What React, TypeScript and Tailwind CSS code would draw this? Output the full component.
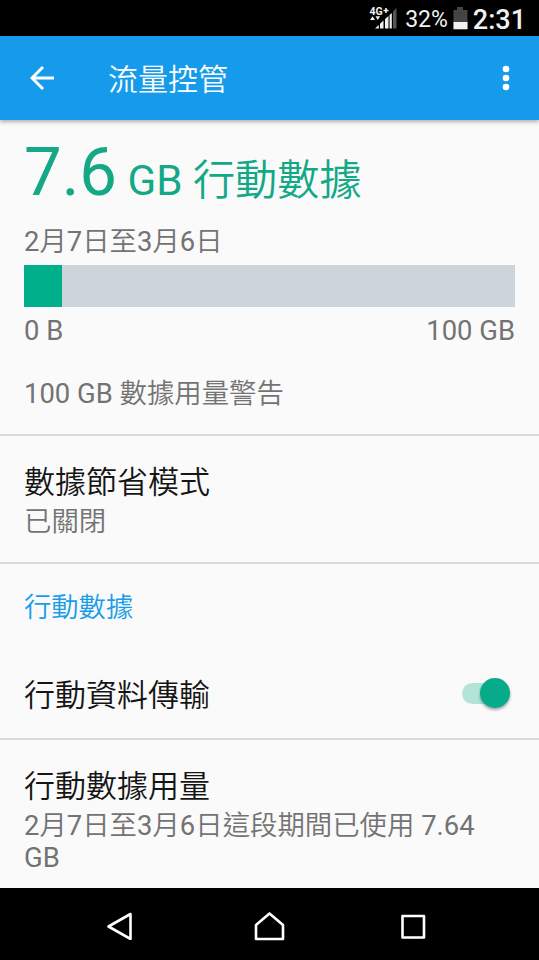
import type { ReactNode } from "react";

const used = 7.64;
const limit = 100;

// Chinese runs use the demilight cut, latin and digits stay regular
function Mixed({ text }: { text: string }) {
  return (
    <>
      {text.split(/([\u4e00-\u9fff]+)/).map((part, i) =>
        i % 2 ? (
          <span key={i} className="font-[350]">
            {part}
          </span>
        ) : (
          part
        )
      )}
    </>
  );
}

function StatusBar() {
  return (
    <div className="flex h-9 items-center justify-end bg-black pr-[13px] pt-1 text-[#f1f1f1]">
      <svg width="28" height="26" viewBox="0 0 28 26" className="mb-1 mr-2">
        <text x="0.5" y="9.500" fontFamily="Roboto" fontSize="10.500" fontWeight="700" fill="#f1f1f1">
          4G
        </text>
        <path d="M17 3v5M14.500 5.500h5" stroke="#f1f1f1" strokeWidth="1.6" />
        <path d="M1 15l2.500-3.800 2.500 3.800zM6.500 11.200l2.300 3.800 2.300-3.800z" fill="#f1f1f1" />
        <path d="M6 23.500l3.800-3.500v3.500zM11 18.800l3.500-3.300v8h-3.500zM16 14l3.500-3v12.500h-3.500z" fill="#f1f1f1" />
        <path d="M20.600 10l2.200-2v15.500h-2.200z" fill="#f1f1f1" />
        <path d="M24 6.500l3.500-3.500v20.500h-3.500z" fill="#555" />
      </svg>
      <span className="text-[23px] leading-8">32%</span>
      <svg width="15" height="23" viewBox="0 0 15 23" className="mb-1 ml-[5px] mr-[5px]">
        <path d="M4 0h6v3h4.500v20H.5V3H4z" fill="#444" />
        <path d="M.5 15h14v7H.5z" fill="#f1f1f1" />
      </svg>
      <span className="text-[27px] font-medium leading-8">2:31</span>
    </div>
  );
}

function AppBar() {
  return (
    <header className="relative flex h-[84px] items-center bg-[#159aec] pl-[30px] pr-7 text-white shadow-[0_2px_4px_rgba(0,0,0,0.3)]">
      <svg width="24" height="24" viewBox="0 0 24 24" fill="none" stroke="currentColor" strokeWidth="2.9">
        <path d="M24 12H2.500M13 1L2 12l11 11" />
      </svg>
      <h1 className="ml-[54px] flex-1 pt-1 text-[30px] font-[350] leading-9">流量控管</h1>
      <svg width="10" height="26" viewBox="0 0 10 26" fill="currentColor">
        <circle cx="5" cy="4" r="3.300" />
        <circle cx="5" cy="13" r="3.300" />
        <circle cx="5" cy="22" r="3.300" />
      </svg>
    </header>
  );
}

function Row({ title, summary, children }: { title: string; summary?: ReactNode; children?: ReactNode }) {
  return (
    <div className="flex items-center justify-between px-6">
      <div>
        <h3 className="text-[31px] font-[350] leading-9 text-[#151515]">{title}</h3>
        {summary && <div className="mt-[5px] text-[27.400px] leading-8 text-[#737373]">{summary}</div>}
      </div>
      {children}
    </div>
  );
}

function Toggle() {
  return (
    <button role="switch" aria-checked="true" className="mb-1.5 mr-[5px] flex h-[21px] w-12 items-center justify-end rounded-full bg-[#b3e4d8]">
      <span className="size-[30px] shrink-0 rounded-full bg-[#06ac89] shadow-[0_2px_3px_rgba(0,0,0,0.35)]" />
    </button>
  );
}

function NavBar() {
  return (
    <nav className="flex h-[72px] items-center bg-black pl-[104px] text-white">
      <svg width="30" height="32" viewBox="0 0 30 32" fill="none" stroke="currentColor" strokeWidth="2.6" strokeLinejoin="round">
        <path d="M4.500 18.500L26.500 6v25z" />
      </svg>
      <svg width="32" height="34" viewBox="0 0 32 34" fill="none" stroke="currentColor" strokeWidth="2.6" strokeLinejoin="round" className="ml-[119px]">
        <path d="M3 18L16.500 6.500l13.500 11.500v14h-27z" />
      </svg>
      <svg width="30" height="32" viewBox="0 0 30 32" fill="none" stroke="currentColor" strokeWidth="2.6" strokeLinejoin="round" className="ml-[113px]">
        <path d="M4.500 8h21.500v21.500H4.500z" />
      </svg>
    </nav>
  );
}

export default function App() {
  return (
    <div className="flex h-[960px] w-[539px] flex-col overflow-hidden bg-[#fafafa] font-[Roboto,'Noto_Sans_CJK_TC',sans-serif]">
      <StatusBar />
      <AppBar />
      <main className="flex-1">
        <section className="h-[316px] border-b-2 border-[#dcdcdc] px-6 pt-[17px] text-[27.400px] leading-8 text-[#737373]">
          <h2 className="flex items-baseline whitespace-pre text-[#13a886]">
            <span className="text-[67px] leading-[70px]">7.6</span>
            <span className="text-[42.200px] leading-[50px]">
              <Mixed text=" GB 行動數據" />
            </span>
          </h2>
          <p className="mt-[19px]">
            <Mixed text="2月7日至3月6日" />
          </p>
          <div className="mt-[7px] h-[42px] bg-[#cdd5dc]">
            <div className="h-full bg-[#00b08c]" style={{ width: `${(used / limit) * 100}%` }} />
          </div>
          <div className="mt-2 flex justify-between">
            <span>0 B</span>
            <span>{limit} GB</span>
          </div>
          <p className="mt-[31px]">
            <Mixed text={`${limit} GB 數據用量警告`} />
          </p>
        </section>

        <section className="h-32 border-b-2 border-[#dcdcdc] pt-[29px]">
          <Row title="數據節省模式" summary={<Mixed text="已關閉" />} />
        </section>

        <section className="h-44 border-b-2 border-[#dcdcdc] pt-7">
          <h2 className="mb-[54px] px-6 text-[27.300px] font-[350] leading-8 text-[#189de8]">行動數據</h2>
          <Row title="行動資料傳輸">
            <Toggle />
          </Row>
        </section>

        <section className="pt-[29px]">
          <Row
            title="行動數據用量"
            summary={
              <>
                <p>
                  <Mixed text={`2月7日至3月6日這段期間已使用 ${used}`} />
                </p>
                <p>GB</p>
              </>
            }
          />
        </section>
      </main>
      <NavBar />
    </div>
  );
}
